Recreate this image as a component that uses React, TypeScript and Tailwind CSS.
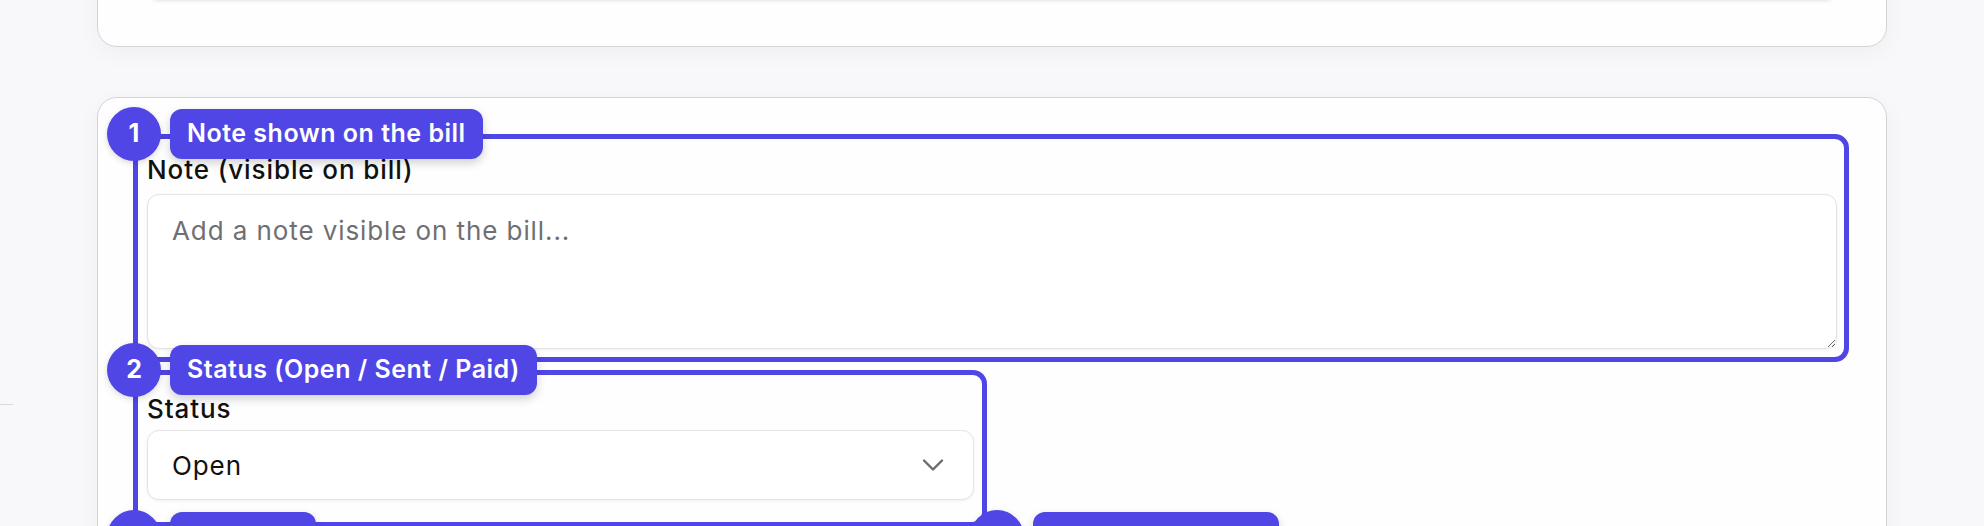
import React from "react";
import { ChevronDown } from "lucide-react";

const Marker = ({ n, label, className }: { n: number; label: string; className: string }) => {
  return (
    <div className={`absolute flex items-center ${className}`}>
      <div className="w-[54px] h-[54px] rounded-full bg-[#4f46e5] text-white flex items-center justify-center text-[25px] font-bold shadow-[0_2px_6px_rgba(0,0,0,0.15)]">
        {n}
      </div>
      <div className="ml-[9px] h-[50px] px-[17px] rounded-[12px] bg-[#4f46e5] text-white text-[25px] tracking-[0.02em] font-semibold flex items-center whitespace-nowrap shadow-[0_4px_10px_rgba(0,0,0,0.18)]">
        {label}
      </div>
    </div>
  );
};

const Highlight = ({ className }: { className: string }) => {
  return <div className={`absolute border-[5px] border-[#4f46e5] rounded-[14px] pointer-events-none ${className}`} />;
};

const BillNoteForm = () => {
  return (
    <div className="relative mt-[50px] bg-[#fefefe] border border-[#d4d4d8] rounded-[20px] shadow-[0_6px_24px_rgba(0,0,0,0.04)] px-[49px] pt-[54px] pb-[60px]">
      <label className="block text-[26px] tracking-[0.035em] leading-[36px] font-medium text-[#111] mb-[6px]">
        Note (visible on bill)
      </label>
      <textarea
        placeholder="Add a note visible on the bill..."
        className="block w-full h-[155px] rounded-[12px] border-[1.5px] border-[#e4e4e7] bg-white shadow-[0_1px_3px_rgba(0,0,0,0.06)] px-[24px] py-[18px] text-[26px] tracking-[0.035em] leading-[36px] text-[#111] placeholder:text-[#6f6f73] outline-none"
      />

      <div className="grid grid-cols-2 gap-x-[36px] gap-y-[36px] mt-[42px]">
        <div>
          <label className="block text-[26px] tracking-[0.035em] leading-[36px] font-medium text-[#111] mb-[3px]">Status</label>
          <div className="h-[70px] rounded-[12px] border-[1.5px] border-[#e4e4e7] bg-white shadow-[0_1px_3px_rgba(0,0,0,0.06)] pl-[24px] pr-[22px] flex items-center justify-between text-[26px] tracking-[0.035em] text-[#111]">
            <span>Open</span>
            <ChevronDown size={36} strokeWidth={1.6} className="text-[#6b6b70]" />
          </div>
        </div>
        <div />
        <div>
          <label className="block text-[26px] leading-[36px] font-medium text-[#111] mb-[3px]">Due date</label>
          <div className="h-[70px] rounded-[12px] border-[1.5px] border-[#e4e4e7] bg-white" />
        </div>
        <div>
          <label className="block text-[26px] leading-[36px] font-medium text-[#111] mb-[3px]">Payment method</label>
          <div className="h-[70px] rounded-[12px] border-[1.5px] border-[#e4e4e7] bg-white" />
        </div>
      </div>

      {/* annotation overlays, coords relative to the card */}
      <Highlight className="left-[35px] top-[36px] w-[1716px] h-[228px]" />
      <Highlight className="left-[35px] top-[272px] w-[854px] h-[157px]" />
      <Highlight className="left-[35px] top-[437px] w-[854px] h-[200px]" />
      <Highlight className="left-[896px] top-[437px] w-[855px] h-[200px]" />

      <Marker n={1} label="Note shown on the bill" className="left-[9px] top-[9px]" />
      <Marker n={2} label="Status (Open / Sent / Paid)" className="left-[9px] top-[245px]" />
      <Marker n={3} label="Due date" className="left-[9px] top-[412px]" />
      <Marker n={4} label="Payment method" className="left-[872px] top-[412px]" />
    </div>
  );
};

export default function App() {
  return (
    <div className="h-[526px] overflow-hidden bg-[#f8f8fa] flex font-['Inter',sans-serif]">
      <div className="w-[13px] shrink-0">
        <div className="mt-[404px] border-t border-[#d9d9dc]" />
      </div>
      <div className="ml-[84px] w-[1790px] shrink-0">
        <div className="-mt-[80px] bg-[#fefefe] border border-[#d4d4d8] rounded-[20px] shadow-[0_6px_24px_rgba(0,0,0,0.04)] px-[49px] pt-[20px] pb-[45px]">
          <div className="h-[60px] rounded-[12px] border-[1.5px] border-[#ececef] bg-white shadow-[0_1px_3px_rgba(0,0,0,0.06)]" />
        </div>
        <BillNoteForm />
      </div>
    </div>
  );
}
